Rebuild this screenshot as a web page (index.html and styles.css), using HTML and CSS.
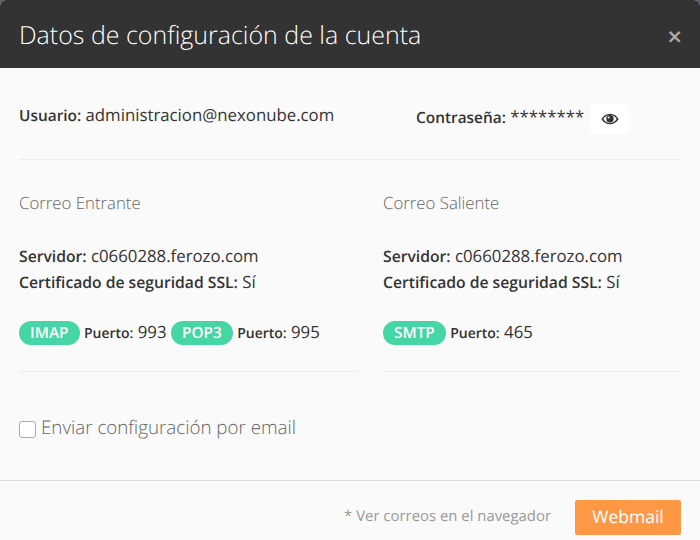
FILE: index.html
```html
<!DOCTYPE html>
<html lang="es">
<head>
<meta charset="utf-8">
<title>Datos de configuración de la cuenta</title>
<link rel="stylesheet" href="styles.css">
</head>
<body>
<div class="modal">
  <header class="modal-header">
    <h1 class="modal-title">Datos de configuración de la cuenta</h1>
    <span class="close">×</span>
  </header>
  <main class="modal-body">
    <section class="credentials">
      <p class="user"><b>Usuario:</b> administracion@nexonube.com</p>
      <div class="password">
        <p class="pass-text"><b>Contraseña:</b> ********</p>
        <button class="eye-btn" type="button" aria-label="Mostrar">
          <svg width="18" height="12" viewBox="0 0 18 12"><path d="M9 .7C5.3.7 2.2 2.9.4 6c1.8 3.1 4.9 5.3 8.6 5.3s6.800-2.200 8.600-5.300C15.800 2.900 12.700.7 9 .7z" fill="#333"/><path d="M9 2C6.400 2 4 3.600 2.300 6 4 8.400 6.400 10 9 10s5-1.600 6.700-4C14 3.600 11.600 2 9 2z" fill="#fafafa"/><circle cx="9" cy="5.800" r="3.700" fill="#333"/><circle cx="7.600" cy="4.400" r="1" fill="#fafafa"/></svg>
        </button>
      </div>
    </section>
    <section class="servers">
      <div class="server left">
        <h2 class="server-title">Correo Entrante</h2>
        <p class="line"><b>Servidor:</b> c0660288.ferozo.com</p>
        <p class="line"><b>Certificado de seguridad SSL:</b> Sí</p>
        <p class="ports"><span class="badge">IMAP</span> <b class="port">Puerto:</b> 993 <span class="badge">POP3</span> <b class="port">Puerto:</b> 995</p>
      </div>
      <div class="server">
        <h2 class="server-title">Correo Saliente</h2>
        <p class="line"><b>Servidor:</b> c0660288.ferozo.com</p>
        <p class="line"><b>Certificado de seguridad SSL:</b> Sí</p>
        <p class="ports"><span class="badge">SMTP</span> <b class="port">Puerto:</b> 465</p>
      </div>
    </section>
    <label class="send"><span class="checkbox"></span>Enviar configuración por email</label>
  </main>
  <footer class="modal-footer">
    <span class="note">* Ver correos en el navegador</span>
    <a class="webmail">Webmail</a>
  </footer>
</div>
</body>
</html>
```
FILE: styles.css
```css
* { box-sizing: border-box; }
html, body { margin: 0; height: 100%; }
body {
  background: #5a6470;
  font-family: "Open Sans", sans-serif;
  color: #333;
  overflow: hidden;
  text-rendering: geometricPrecision;
}
p, h1, h2 { margin: 0; }
b { font-weight: 600; }
.modal {
  width: 700px;
  height: 540px;
  display: flex;
  flex-direction: column;
  background: #fafafa;
  border-radius: 6px 6px 0 0;
  overflow: hidden;
}
.modal-header {
  height: 68px;
  flex: none;
  background: #333;
  display: flex;
  align-items: center;
  justify-content: space-between;
  padding: 1px 19px 0;
}
.modal-title {
  font-size: 24.960px;
  font-weight: 300;
  color: #fff;
  line-height: 34px;
}
.close {
  font-size: 26px;
  font-weight: 600;
  color: #aaa;
  line-height: 1;
  margin-top: 2px;
  margin-right: -1px;
}
.modal-body {
  flex: 1;
  padding: 0 19px 0;
}
.credentials {
  height: 92px;
  border-bottom: 1px solid #eee;
  display: flex;
  align-items: flex-start;
}
.user { font-size: 16.800px; line-height: 22px; margin-top: 36px; width: 397px; }
.user b, .pass-text b { font-size: 15.400px; }
.password { display: flex; align-items: flex-start; margin-top: 36px; }
.pass-text { font-size: 16.800px; line-height: 24px; margin-top: 1px; white-space: nowrap; }
.eye-btn {
  width: 39px;
  height: 30px;
  margin-left: 6px;
  padding: 0;
  background: #fff;
  border: 0;
  border-radius: 3px;
  display: flex;
  align-items: center;
  justify-content: center;
}
.servers {
  display: grid;
  grid-template-columns: 339px 297px;
  column-gap: 25px;
}
.server {
  height: 212px;
  border-bottom: 1px solid #eee;
}
.server-title {
  font-size: 16.800px;
  font-weight: 300;
  color: #666;
  line-height: 22px;
  margin-top: 32px;
  margin-bottom: 29px;
}
.line { font-size: 16.800px; line-height: 26px; }
.line b { font-size: 15.700px; }
.ports { font-size: 16.800px; line-height: 24px; margin-top: 25px; }
.port { font-size: 14px; }
.badge {
  display: inline-block;
  padding: 0 11px;
  height: 24px;
  line-height: 23px;
  border-radius: 12px;
  background: #46d5a5;
  color: #fff;
  font-size: 15.400px;
  font-weight: 600;
}
.send {
  display: flex;
  align-items: center;
  margin-top: 43px;
  font-size: 18.750px;
  font-weight: 300;
  line-height: 26px;
  color: #666;
}
.checkbox {
  width: 17px;
  height: 17px;
  margin-right: 5px;
  margin-top: 2px;
  border: 1px solid #aaa;
  border-radius: 3px;
  background: #fff;
}
.modal-footer {
  height: 60px;
  flex: none;
  border-top: 1px solid #ddd;
  display: flex;
  align-items: center;
  justify-content: flex-end;
  padding: 13px 19px 0;
}
.note { font-size: 14.900px; color: #999; margin-right: 24px; margin-bottom: 2px; }
.webmail {
  width: 106px;
  height: 35px;
  background: #ff9845;
  color: #fff;
  font-size: 17.500px;
  line-height: 35px;
  text-align: center;
  border-radius: 2px;
}
```
